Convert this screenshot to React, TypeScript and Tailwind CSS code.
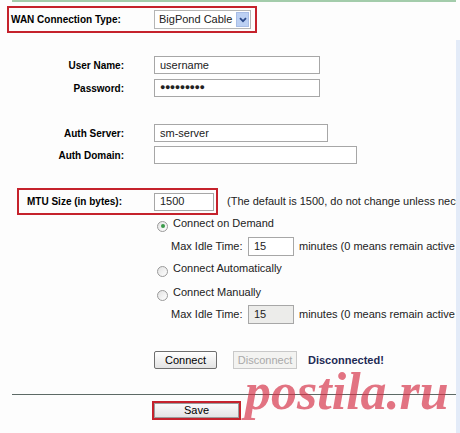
import React from 'react';

const font = "font-['Liberation_Sans',Arial,sans-serif]";

const Field: React.FC<{ label: string; value?: string; width: string; top: string; small?: boolean }> = ({
  label,
  value,
  width,
  top,
  small,
}) => (
  <div className={`flex items-center ${top}`}>
    <div className="w-[124px] shrink-0 text-right text-[10px] font-bold text-black">{label}</div>
    <div
      className={`ml-[30px] h-[18px] shrink-0 ${width} border border-[#a7a7a7] bg-white flex items-center pl-[5px] ${
        small ? 'text-[9px] tracking-[-0.5px]' : 'text-[11px]'
      } text-[#222]`}
    >
      {value}
    </div>
  </div>
);

const Radio: React.FC<{ checked?: boolean; label: string; top: string }> = ({ checked, label, top }) => (
  <div className={`flex items-center h-[16px] pl-[157px] ${top}`}>
    <div className="mt-[6px] shrink-0 w-[11px] h-[11px] rounded-full border border-[#9a9a9a] bg-gradient-to-br from-[#e2e2e2] to-white flex items-center justify-center">
      {checked && <div className="w-[4px] h-[4px] rounded-full bg-[#3a9a4a]" />}
    </div>
    <span className="ml-[5px] text-[11px] text-[#222] whitespace-nowrap">{label}</span>
  </div>
);

const IdleRow: React.FC<{ disabled?: boolean; top: string }> = ({ disabled, top }) => (
  <div className={`flex items-center pl-[171px] whitespace-nowrap ${top}`}>
    <span className="shrink-0 w-[77px] text-[11px] text-[#222]">Max Idle Time:</span>
    <div
      className={`shrink-0 h-[19px] w-[46px] border border-[#a7a7a7] flex items-center pl-[5px] text-[11px] text-[#222] ${
        disabled ? 'bg-[#ececea]' : 'bg-white'
      }`}
    >
      15
    </div>
    <span className="shrink-0 ml-[5px] text-[11px] text-[#222]">minutes (0 means remain active at all times.)</span>
  </div>
);

export default function App() {
  return (
    <div className={`relative w-[460px] h-[433px] overflow-hidden bg-[#fdfdfd] flex ${font}`}>
      <div className="w-[456px] shrink-0 flex flex-col overflow-hidden">
        <div className="ml-[12px] h-[2px] bg-[#a3ccab]" />

        {/* WAN type */}
        <div className="mt-[4px] ml-[7px] w-[250px] h-[27px] border-2 border-[#c5222c] flex items-center">
          <div className="w-[145px] shrink-0 pl-[2px] text-[10px] font-bold text-black whitespace-nowrap">
            WAN Connection Type:
          </div>
          <div className="h-[19px] w-[97px] shrink-0 border border-[#b5b5b5] bg-white flex items-center">
            <span className="flex-1 pl-[4px] text-[11px] text-[#222] whitespace-nowrap">BigPond Cable</span>
            <div className="mr-[1px] w-[13px] h-[15px] bg-[#bcd0f3] border border-[#a8bde6] flex items-center justify-center">
              <svg width="8" height="6" viewBox="0 0 8 6">
                <path d="M1 1.2 L4 4.2 L7 1.2" stroke="#2c4a8a" strokeWidth="1.8" fill="none" />
              </svg>
            </div>
          </div>
        </div>

        <Field label="User Name:" value="username" width="w-[166px]" top="mt-[23px]" />
        <Field label="Password:" value="●●●●●●●●●" width="w-[166px]" top="mt-[5px]" small />
        <Field label="Auth Server:" value="sm-server" width="w-[174px]" top="mt-[27px]" />
        <Field label="Auth Domain:" width="w-[203px]" top="mt-[4px]" />

        {/* MTU */}
        <div className="mt-[24px] flex items-center whitespace-nowrap">
          <div className="shrink-0 ml-[17px] w-[201px] h-[27px] border-2 border-[#c5222c] flex items-center">
            <div className="w-[135px] shrink-0 pl-[8px] text-[10px] font-bold text-black">MTU Size (in bytes):</div>
            <div className="shrink-0 h-[18px] w-[60px] border border-[#a7a7a7] bg-white flex items-center pl-[5px] text-[11px] text-[#222]">
              1500
            </div>
          </div>
          <span className="shrink-0 ml-[9px] text-[11px] text-[#222]">
            (The default is 1500, do not change unless necessary.)
          </span>
        </div>

        <Radio checked label="Connect on Demand" top="mt-0" />
        <IdleRow top="mt-[6px]" />
        <Radio label="Connect Automatically" top="mt-[4px]" />
        <Radio label="Connect Manually" top="mt-[8px]" />
        <IdleRow disabled top="mt-[5px]" />

        {/* Buttons */}
        <div className="mt-[27px] flex items-center pl-[154px]">
          <button className="h-[18px] w-[63px] border border-[#6e6e6e] rounded-[2px] bg-gradient-to-b from-white to-[#e3e3e3] text-[11px] text-black">
            Connect
          </button>
          <button
            disabled
            className="ml-[16px] h-[18px] w-[64px] border border-[#c9c9c9] bg-[#f3f3f1] text-[11px] text-[#a9a9a9]"
          >
            Disconnect
          </button>
          <span className="ml-[11px] text-[11px] font-bold text-[#1e2b55]">Disconnected!</span>
        </div>

        <div className="mt-[25px] ml-[12px] h-[1px] bg-[#5d6a66]" />

        {/* Save */}
        <div className="mt-[6px] ml-[152px] w-[89px] h-[19px] border-2 border-[#c5222c] flex">
          <button className="flex-1 bg-gradient-to-b from-[#fafafa] to-[#e4e4e4] border border-[#9c9c9c] text-[11px] text-black leading-none">
            Save
          </button>
        </div>
      </div>

      <div className="w-[4px] flex flex-col">
        <div className="h-[40px] bg-[#fdfdfd]" />
        <div className="flex-1 bg-[#e3ebf8]" />
      </div>

      <div className="absolute left-[245px] top-[372px] text-[52px] leading-[40px] italic font-bold font-['Liberation_Serif',serif] text-[#d42a40]/65 pointer-events-none">
        postila.ru
      </div>
    </div>
  );
}
